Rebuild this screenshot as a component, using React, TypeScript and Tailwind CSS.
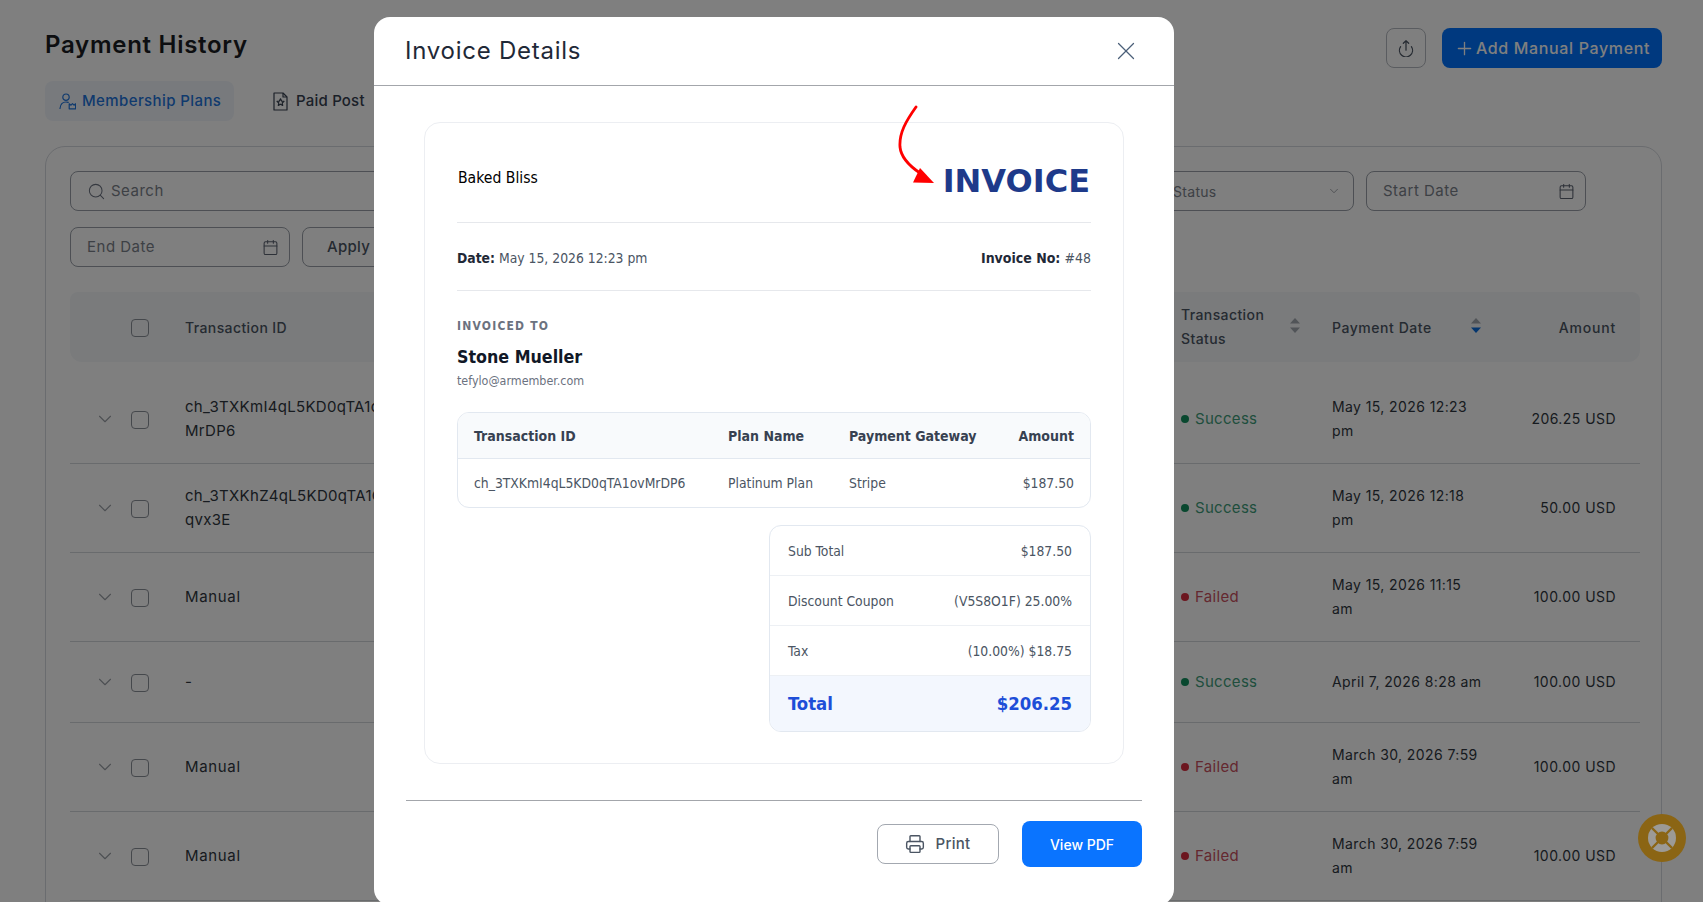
import { Calendar, ChevronDown, Printer, Search, X, Plus } from "lucide-react";

const poppins = "font-['Inter',sans-serif]";
const inv = "font-['DejaVu_Sans_Condensed','DejaVu_Sans',sans-serif]";

type Row = { id: React.ReactNode; long?: boolean; status: "Success" | "Failed"; date: React.ReactNode; amount: string; h: string };

const rows: Row[] = [
  { id: <>ch_3TXKmI4qL5KD0qTA1ov<br />MrDP6</>, long: true, status: "Success", date: <>May 15, 2026 12:23<br />pm</>, amount: "206.25 USD", h: "h-[89px]" },
  { id: <>ch_3TXKhZ4qL5KD0qTA1Gh<br />qvx3E</>, long: true, status: "Success", date: <>May 15, 2026 12:18<br />pm</>, amount: "50.00 USD", h: "h-[89px]" },
  { id: "Manual", status: "Failed", date: <>May 15, 2026 11:15<br />am</>, amount: "100.00 USD", h: "h-[89px]" },
  { id: "-", status: "Success", date: "April 7, 2026 8:28 am", amount: "100.00 USD", h: "h-[81px]" },
  { id: "Manual", status: "Failed", date: <>March 30, 2026 7:59<br />am</>, amount: "100.00 USD", h: "h-[89px]" },
  { id: "Manual", status: "Failed", date: <>March 30, 2026 7:59<br />am</>, amount: "100.00 USD", h: "h-[89px]" },
];

function Sort({ active }: { active?: boolean }) {
  return (
    <svg className="mb-[3px]" width="12" height="17" viewBox="0 0 12 17">
      <path d="M6 1 L11 6.5 H1 Z" fill="#a3a8b0" />
      <path d="M1 10.5 H11 L6 16 Z" fill={active ? "#0a6ddc" : "#a3a8b0"} />
    </svg>
  );
}

function Check() {
  return <div className="mt-[1px] h-[18px] w-[18px] shrink-0 rounded-[4px] border border-[#8b9098]" />;
}

function Upload() {
  return (
    <svg width="18" height="18" viewBox="0 0 16 16" fill="none" stroke="#4b5563" strokeWidth="1.1" strokeLinecap="round" strokeLinejoin="round">
      <path d="M8 1.5 V10 M5.6 3.8 L8 1.5 L10.4 3.8" />
      <path d="M3.2 6.8 A5.8 5.8 0 1 0 12.8 6.8" />
    </svg>
  );
}

function MemberIcon() {
  return (
    <svg width="17" height="17" viewBox="0 0 17 17" fill="none" stroke="#1f74dc" strokeWidth="1.2" strokeLinecap="round" strokeLinejoin="round">
      <circle cx="7" cy="4.2" r="3.2" />
      <path d="M1 15.5 C1.4 11.5 3.5 9 7 9 C7.8 9 8.6 9.1 9.2 9.4" />
      <path d="M10.2 10.8 L12 12.2 L13.5 10.6 L15 12.2 L16.6 10.8 V15.8 H10.2 Z" />
    </svg>
  );
}

function PostIcon() {
  return (
    <svg width="15" height="19" viewBox="0 0 15 19" fill="none" stroke="#374151" strokeWidth="1.2" strokeLinejoin="round">
      <path d="M1 1 H10 L14 5 V18 H1 Z" />
      <path d="M10 1 V5 H14" />
      <path d="M7.5 6.8 L8.6 9.1 L11 9.4 L9.2 11 L9.7 13.4 L7.5 12.2 L5.3 13.4 L5.8 11 L4 9.4 L6.4 9.1 Z" />
    </svg>
  );
}

function Field({ label, className }: { label: string; className: string }) {
  return (
    <div className={`flex h-10 items-center justify-between rounded-lg border border-[#9a9fa8] pl-4 pr-[10px] ${className}`}>
      <span className="pt-[1px] text-[15px] tracking-[0.5px] text-[#7b818a]">{label}</span>
      <Calendar size={17} strokeWidth={1.5} className="text-[#5b6270]" />
    </div>
  );
}

export default function App() {
  return (
    <div className={`relative h-[902px] w-full overflow-hidden bg-white ${poppins}`}>
      <div className="h-[902px] overflow-hidden pl-[45px] pr-[41px] pt-[28px]">
        <div className="flex h-10 items-start justify-between">
          <h1 className="mt-[1px] text-[24px] font-semibold leading-8 tracking-[0.72px] text-[#1a1d23]">Payment History</h1>
          <div className="flex gap-4">
            <div className="flex h-10 w-10 items-center justify-center rounded-lg border border-[#b5b9c0]">
              <Upload />
            </div>
            <div className="flex h-10 w-[220px] items-center justify-center gap-[1px] rounded-lg bg-[#0073ff] text-[16px] font-medium tracking-[0.65px] text-[#fff]">
              <Plus size={21} strokeWidth={1.5} />
              Add Manual Payment
            </div>
          </div>
        </div>

        <div className="mt-[13px] flex h-10 items-center">
          <div className="flex h-10 w-[189px] items-center gap-[6px] rounded-lg bg-[#f1f5fb] pl-[14px] text-[15px] font-medium tracking-[0.4px] text-[#1f74dc]">
            <MemberIcon />
            Membership Plans
          </div>
          <div className="ml-[39px] flex items-center gap-[8px] text-[15px] font-medium tracking-[0.2px] text-[#374151]">
            <PostIcon />
            Paid Post
          </div>
        </div>

        <div className="mt-[25px] h-[900px] rounded-[20px] border border-[#d5d8de] pl-6 pr-[21px] pt-6">
          <div className="flex gap-3">
            <div className="flex h-10 w-[1075px] items-center gap-[5px] rounded-lg border border-[#9a9fa8] pl-[16px]">
              <Search size={19} strokeWidth={1.3} className="text-[#6b7280]" />
              <span className="pt-[1px] text-[15px] tracking-[0.5px] text-[#7b818a]">Search</span>
            </div>
            <div className="flex h-10 w-[197px] items-center justify-between rounded-lg border border-[#9a9fa8] pl-[15px] pr-3">
              <span className="text-[14px] tracking-[0.3px] text-[#7b818a]">Status</span>
              <ChevronDown size={14} strokeWidth={1.2} className="text-[#7b818a]" />
            </div>
            <Field label="Start Date" className="w-[220px]" />
          </div>
          <div className="mt-4 flex gap-3">
            <Field label="End Date" className="w-[220px]" />
            <div className="flex h-10 w-[140px] items-center rounded-lg border border-[#9a9fa8] pl-6 text-[15px] font-medium tracking-[0.3px] text-[#4b5563]">Apply</div>
          </div>

          <div className="mt-[25px] flex h-[70px] items-center rounded-t-lg rounded-b-xl bg-[#f4f7f9] text-[14px] font-medium tracking-[0.4px] text-[#4b5563]">
            <div className="flex w-[115px] pl-[61px]"><Check /></div>
            <div className="flex-1">Transaction ID</div>
            <div className="flex w-[151px] items-center">
              <span className="w-[108px] leading-6">Transaction<br />Status</span>
              <Sort />
            </div>
            <div className="flex w-[168px] items-center">
              <span className="w-[138px] tracking-[0.55px]">Payment Date</span>
              <Sort active />
            </div>
            <div className="w-[140px] pr-6 text-right tracking-[0.8px]">Amount</div>
          </div>

          <div className="mt-[13px]">
            {rows.map((r, i) => (
              <div key={i} className={`flex items-center border-b border-[#d3d6db] text-[15px] leading-6 tracking-[0.2px] text-[#2f3640] ${r.h}`}>
                <div className="flex w-[115px] items-center pl-[24px]">
                  <ChevronDown size={22} strokeWidth={1.2} className="mr-[15px] text-[#9a9fa6]" />
                  <Check />
                </div>
                <div className={`flex-1 whitespace-nowrap ${r.long ? "tracking-[0.3px]" : "tracking-[0.65px]"}`}>{r.id}</div>
                <div className={`flex w-[151px] items-center gap-[6px] tracking-[0.3px] ${r.status === "Success" ? "text-[#3f9d7a]" : "text-[#c9505f]"}`}>
                  <span className={`h-2 w-2 rounded-full ${r.status === "Success" ? "bg-[#12905f]" : "bg-[#d92d3f]"}`} />
                  {r.status}
                </div>
                <div className="w-[168px] whitespace-nowrap text-[14px] tracking-[0.4px]">{r.date}</div>
                <div className="w-[140px] pr-6 text-right text-[14px] tracking-[0.45px]">{r.amount}</div>
              </div>
            ))}
          </div>
        </div>
      </div>

      {/* dim layer */}
      <div className="absolute inset-0 bg-black/50" />

      {/* help button */}
      <svg className="absolute left-[1638px] top-[814px]" width="48" height="48" viewBox="0 0 48 48">
        <circle cx="24" cy="24" r="24" fill="#8b6514" />
        <circle cx="24" cy="24" r="14" fill="#9c9a96" />
        <path d="M14 14 L34 34 M34 14 L14 34" stroke="#8b6514" strokeWidth="2.4" />
        <circle cx="24" cy="24" r="6.4" fill="#8b6514" />
      </svg>

      {/* modal */}
      <div className="absolute left-[374px] top-[17px] h-[888px] w-[800px] rounded-2xl bg-white">
        <div className="flex h-[69px] items-center justify-between border-b border-[#a3a6ab] pl-[31px] pr-[33px]">
          <h2 className="text-[24px] font-normal tracking-[0.75px] text-[#1f2937]">Invoice Details</h2>
          <X size={30} strokeWidth={1} className="text-[#4b5f78]" />
        </div>

        <div className={`relative mx-[50px] mt-[36px] rounded-2xl border border-[#eceef2] px-8 pb-[31px] ${inv}`}>
          <svg className="absolute left-[473px] top-[-18px]" width="40" height="84" viewBox="0 0 40 84" fill="none">
            <path d="M18 2 C8 16 1 28 2 42 C3 52 10 60 22 68" stroke="#f00" strokeWidth="2.8" strokeLinecap="round" />
            <path d="M22 63 L36 78 L15 77.5 Z" fill="#f00" />
          </svg>

          <div className="flex h-[100px] items-center justify-between border-b border-[#e6e8ec] pt-[12px]">
            <span className="pl-[1px] pt-[1px] text-[15.6px] text-[#000]">Baked Bliss</span>
            <span className="mr-[1px] mt-[4px] font-['DejaVu_Sans',sans-serif] text-[32px] font-bold text-[#1e3a8a]">INVOICE</span>
          </div>
          <div className="flex h-[68px] items-center justify-between border-b border-[#e6e8ec] pt-[4px] text-[13.8px] text-[#4b5563]">
            <span><b className="text-[#1f2937]">Date:</b> May 15, 2026 12:23 pm</span>
            <span className="text-[14px]"><b className="text-[#1f2937]">Invoice No:</b> #48</span>
          </div>

          <div className="mt-[27px] text-[12px] font-bold leading-4 tracking-[1.2px] text-[#6b7280]">INVOICED TO</div>
          <div className="mt-[11px] text-[17.7px] font-bold leading-6 text-[#111827]">Stone Mueller</div>
          <div className="mt-1 text-[12.4px] leading-4 text-[#6b7280]">tefylo@armember.com</div>

          <div className="mt-[23px] overflow-hidden rounded-xl border border-[#e2e8f0] text-[13.8px]">
            <div className="grid h-[46px] grid-cols-[254px_121px_1fr_auto] items-center border-b border-[#e2e8f0] bg-[#f8fafc] px-4 pt-[1px] text-[14px] font-bold text-[#374151]">
              <span>Transaction ID</span>
              <span>Plan Name</span>
              <span>Payment Gateway</span>
              <span>Amount</span>
            </div>
            <div className="grid h-[48px] grid-cols-[254px_121px_1fr_auto] items-center px-4 pt-[1px] text-[#4b5563]">
              <span>ch_3TXKmI4qL5KD0qTA1ovMrDP6</span>
              <span>Platinum Plan</span>
              <span>Stripe</span>
              <span>$187.50</span>
            </div>
          </div>

          <div className="ml-auto mt-[17px] w-[322px] overflow-hidden rounded-xl border border-[#e2e8f0] text-[13.8px] text-[#4b5563]">
            {[
              ["Sub Total", "$187.50"],
              ["Discount Coupon", "(V5S8O1F) 25.00%"],
              ["Tax", "(10.00%) $18.75"],
            ].map(([a, b]) => (
              <div key={a} className="flex h-[50px] items-center justify-between border-b border-[#edf0f4] pl-[18px] pr-[18px] pt-[1px]">
                <span>{a}</span>
                <span>{b}</span>
              </div>
            ))}
            <div className="flex h-[55px] items-center justify-between bg-[#f3f7fe] px-[18px] text-[18.4px] font-bold text-[#1d4ed8]">
              <span>Total</span>
              <span>$206.25</span>
            </div>
          </div>
        </div>

        <div className="mx-8 mt-[36px] flex items-center justify-end gap-[23px] border-t border-[#a3a6ab] pt-[20px]">
          <div className="flex h-10 w-[122px] items-center justify-center gap-[10px] rounded-lg border border-[#a3a8b0] text-[15px] font-medium tracking-[0.3px] text-[#4b5563]">
            <Printer size={20} strokeWidth={1.7} />
            Print
          </div>
          <div className="flex h-[46px] w-[120px] items-center justify-center rounded-lg bg-[#0a74ff] text-[14px] font-medium text-white">View PDF</div>
        </div>
      </div>
    </div>
  );
}
